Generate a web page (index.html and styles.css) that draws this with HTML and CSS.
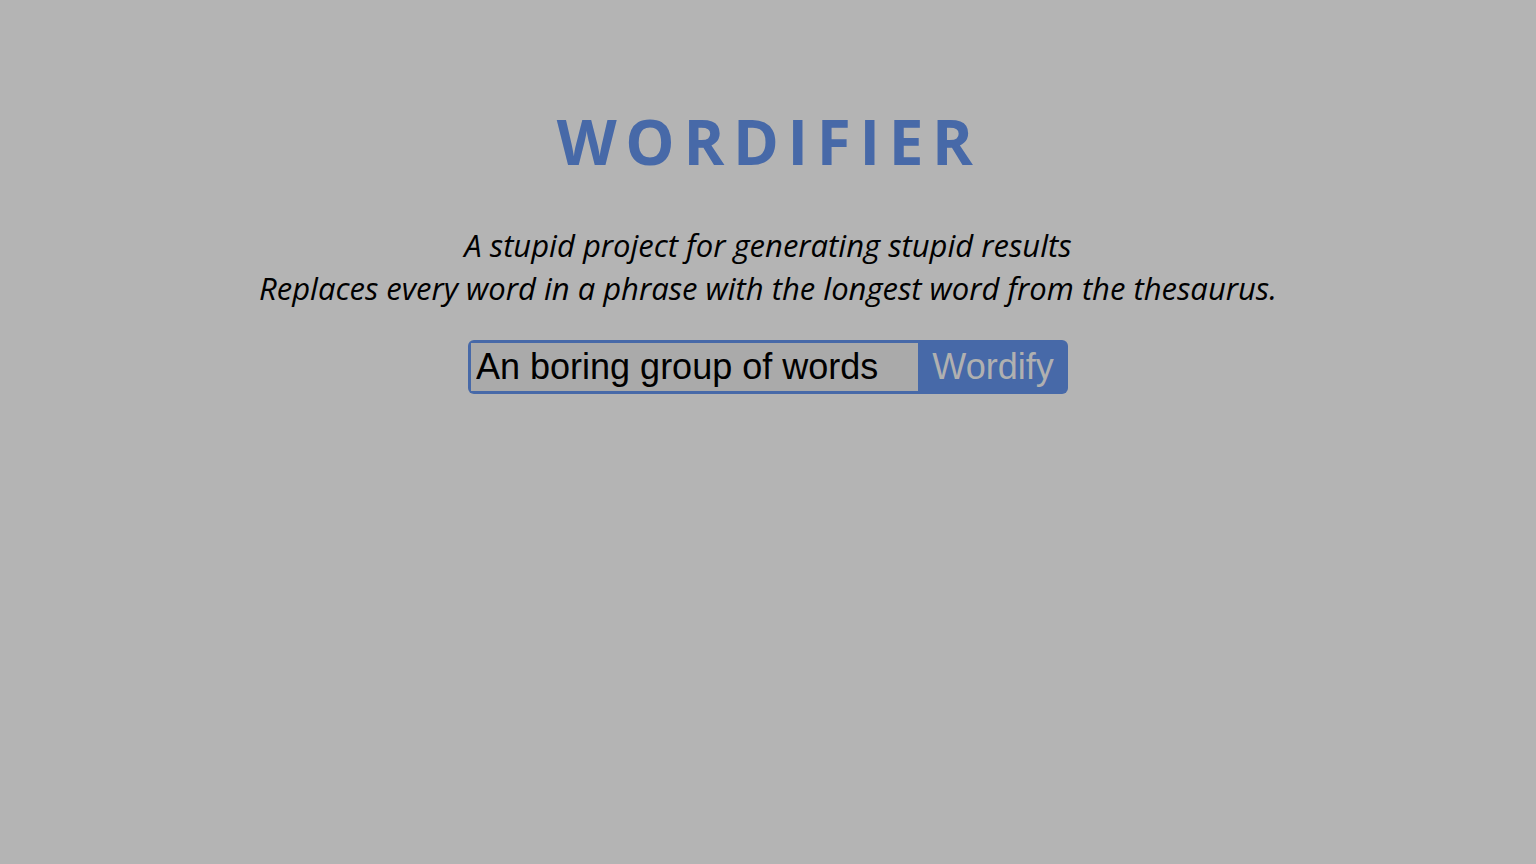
FILE: index.html
```html
<!DOCTYPE html>
<html lang="en">
<head>
<meta charset="utf-8">
<title>Wordifier</title>
<link rel="stylesheet" href="styles.css">
</head>
<body>
<main class="page">
  <h1 class="title">WORDIFIER</h1>
  <p class="tagline">A stupid project for generating stupid results<br>Replaces every word in a phrase with the longest word from the thesaurus.</p>
  <form class="wordify-form">
    <input class="phrase" type="text" value="An boring group of words">
    <button class="go" type="button">Wordify</button>
  </form>
</main>
</body>
</html>
```
FILE: styles.css
```css
html, body {
  margin: 0;
  padding: 0;
  background: #b4b4b4;
}
.page {
  display: flex;
  flex-direction: column;
  align-items: center;
  padding-top: 96px;
  font-family: "Open Sans", "Noto Sans", sans-serif;
}
.title {
  margin: 0 -0.04em 0 0;
  font-size: 62px;
  line-height: 90px;
  font-weight: 700;
  letter-spacing: 0.14em;
  color: #4769a8;
}
.tagline {
  margin: 38px 0 0;
  text-align: center;
  font-style: italic;
  font-size: 31px;
  line-height: 43px;
  color: #000;
}
.wordify-form {
  margin-top: 30px;
  display: flex;
  width: 600px;
  height: 54px;
  box-sizing: border-box;
  padding: 3px 0 3px 3px;
  background: #4769a8;
  border-radius: 6px;
}
.phrase {
  flex: 0 0 447px;
  min-width: 0;
  width: 447px;
  box-sizing: border-box;
  border: none;
  outline: none;
  margin: 0;
  padding: 0 5px;
  background: #aaaaaa;
  font-family: "Liberation Sans", Arial, sans-serif;
  font-size: 36px;
  color: #000;
}
.go {
  flex: 1 1 auto;
  min-width: 0;
  border: none;
  margin: 0;
  padding: 0;
  background: transparent;
  font-family: "Liberation Sans", Arial, sans-serif;
  font-size: 36px;
  color: #b0b0b0;
}
```
